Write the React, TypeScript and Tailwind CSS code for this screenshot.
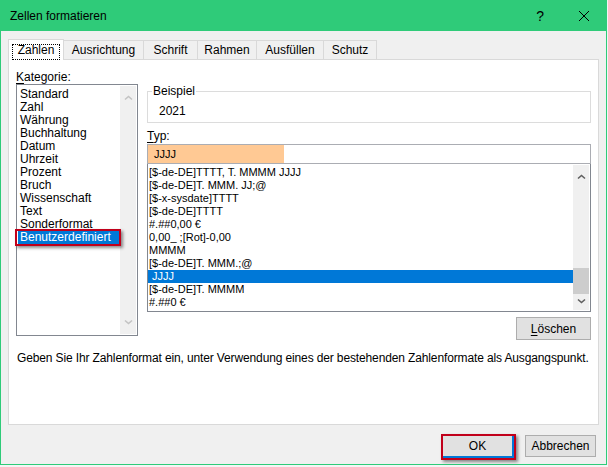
import React from 'react'

const kategorien = [
  'Standard',
  'Zahl',
  'Währung',
  'Buchhaltung',
  'Datum',
  'Uhrzeit',
  'Prozent',
  'Bruch',
  'Wissenschaft',
  'Text',
  'Sonderformat',
  'Benutzerdefiniert',
]

const formate = [
  '[$-de-DE]TTTT, T. MMMM JJJJ',
  '[$-de-DE]T. MMM. JJ;@',
  '[$-x-sysdate]TTTT',
  '[$-de-DE]TTTT',
  '#.##0,00 €',
  '0,00_ ;[Rot]-0,00',
  'MMMM',
  '[$-de-DE]T. MMM.;@',
  'JJJJ',
  '[$-de-DE]T. MMMM',
  '#.##0 €',
]

const tabs = [
  { label: 'Ausrichtung', w: 'w-[80px]' },
  { label: 'Schrift', w: 'w-[54px]' },
  { label: 'Rahmen', w: 'w-[59px]' },
  { label: 'Ausfüllen', w: 'w-[67px]' },
  { label: 'Schutz', w: 'w-[53px]' },
]

function Chevron({ down, dim }: { down?: boolean; dim?: boolean }) {
  return (
    <svg width="9" height="6" viewBox="0 0 9 6" className={dim ? 'text-[#c3c3c3]' : 'text-[#606060]'}>
      <polyline
        points={down ? '1,1.5 4.5,4.5 8,1.5' : '1,4.5 4.5,1.5 8,4.5'}
        fill="none"
        stroke="currentColor"
        strokeWidth="1.6"
      />
    </svg>
  )
}

export default function App() {
  return (
    <div className="w-[608px] h-[467px] bg-[#f4f4f4] overflow-hidden font-['Liberation_Sans',Arial,sans-serif] text-[12px] leading-[14px] text-black">
      <div className="w-[607px] h-[465px] border border-[#2fcb79] bg-[#f0f0f0] flex flex-col">
        {/* Title bar */}
        <div className="h-[30px] shrink-0 bg-[#2fcb79] flex items-center pl-[9px]">
          <span className="flex-1 text-[12px]">Zellen formatieren</span>
          <span className="text-[14px] mr-[34px]">?</span>
          <svg width="12" height="12" viewBox="0 0 12 12" className="mr-[16px]">
            <path d="M1 1L11 11M11 1L1 11" stroke="#000" strokeWidth="1" />
          </svg>
        </div>

        {/* Tabs */}
        <div className="h-[28px] shrink-0 flex items-end pl-[7px]">
          <div className="relative z-10 -mb-px h-[21px] w-[56px] border border-b-0 border-[#d9d9d9] bg-white flex items-center justify-center pb-[1px]">
            Zahlen
            <span className="absolute left-[3px] top-[4px] w-[48px] h-[16px] border border-dotted border-black" />
          </div>
          {tabs.map((t) => (
            <div
              key={t.label}
              className={`h-[19px] ${t.w} border-t border-r border-[#d9d9d9] flex items-center justify-center`}
            >
              {t.label}
            </div>
          ))}
        </div>

        {/* Panel */}
        <div className="ml-[7px] w-[591px] h-[366px] shrink-0 border border-[#d9d9d9] bg-white pt-[10px] px-[7px]">
          <div className="flex items-start gap-[9px]">
            {/* Kategorie */}
            <div className="w-[122px]">
              <div>
                <span className="underline underline-offset-2">K</span>ategorie:
              </div>
              <div className="h-[252px] border border-[#828790] flex">
                <div className="flex-1 pt-[3px] pl-[1px]">
                  {kategorien.map((k) =>
                    k === 'Benutzerdefiniert' ? (
                      <div key={k} className="relative h-[13px] leading-[13px] pl-[2px] bg-[#0078d7] text-white">
                        {k}
                        <span className="absolute -left-[3px] -top-[2px] w-[106px] h-[17px] border-2 border-[#c1001b] shadow-[2px_2px_3px_rgba(0,0,0,0.45)]" />
                      </div>
                    ) : (
                      <div key={k} className="h-[13px] leading-[13px] pl-[2px]">
                        {k}
                      </div>
                    ),
                  )}
                </div>
                <div className="w-[16px] my-[1px] mr-[1px] bg-[#f0f0f0] flex flex-col items-center justify-between py-[9px]">
                  <Chevron dim />
                  <Chevron down dim />
                </div>
              </div>
            </div>

            {/* Typ */}
            <div className="flex-1 mt-[14px] flex flex-col">
              <div className="relative mt-[7px] h-[32px] border border-[#dcdcdc] pl-[11px] pt-[12px]">
                <span className="absolute left-[4px] -top-[8px] bg-white px-[1px]">Beispiel</span>
                2021
              </div>
              <div className="mt-[6px]">
                <span className="underline underline-offset-2">T</span>yp:
              </div>
              <div className="mt-[1px] h-[20px] border border-[#abadb3] flex">
                <div className="w-[136px] bg-[#ffc994] text-[11px] leading-[18px] pl-[6px]">JJJJ</div>
              </div>
              <div className="h-[148px] border border-[#828790] border-t-0 flex text-[11px]">
                <div className="flex-1 pt-[2px]">
                  {formate.map((f) =>
                    f === 'JJJJ' ? (
                      <div key={f} className="h-[13px] leading-[13px] pl-[4px] bg-[#0078d7] text-white">
                        {f}
                      </div>
                    ) : (
                      <div key={f} className="h-[13px] leading-[13px] pl-[1px]">
                        {f}
                      </div>
                    ),
                  )}
                </div>
                <div className="w-[16px] mt-[1px] mb-[1px] mr-[1px] bg-[#f0f0f0] flex flex-col items-center pt-[9px] pb-[6px]">
                  <Chevron />
                  <div className="flex-1" />
                  <div className="w-[16px] h-[26px] bg-[#cdcdcd] mb-[4px]" />
                  <Chevron down />
                </div>
              </div>
              <button className="self-end mt-[5px] w-[75px] h-[23px] border border-[#adadad] bg-[#e1e1e1] flex items-center justify-center">
                <span>
                  <span className="underline underline-offset-2">L</span>öschen
                </span>
              </button>
            </div>
          </div>

          <div className="mt-[11px] pl-[1px] whitespace-nowrap tracking-[-0.13px]">
            Geben Sie Ihr Zahlenformat ein, unter Verwendung eines der bestehenden Zahlenformate als Ausgangspunkt.
          </div>
        </div>

        {/* Footer */}
        <div className="flex justify-end items-start gap-[9px] pr-[10px] mt-[9px]">
          <div className="w-[75px] h-[26px] border-2 border-[#c1001b] shadow-[2px_2px_3px_rgba(0,0,0,0.45)]">
            <button className="w-full h-full bg-[#e1e1e1] border-b-2 border-r-2 border-[#0078d7] flex items-center justify-center">
              OK
            </button>
          </div>
          <button className="mt-[1px] w-[71px] h-[22px] border border-[#adadad] bg-[#e1e1e1] flex items-center justify-center">
            Abbrechen
          </button>
        </div>
      </div>
    </div>
  )
}
